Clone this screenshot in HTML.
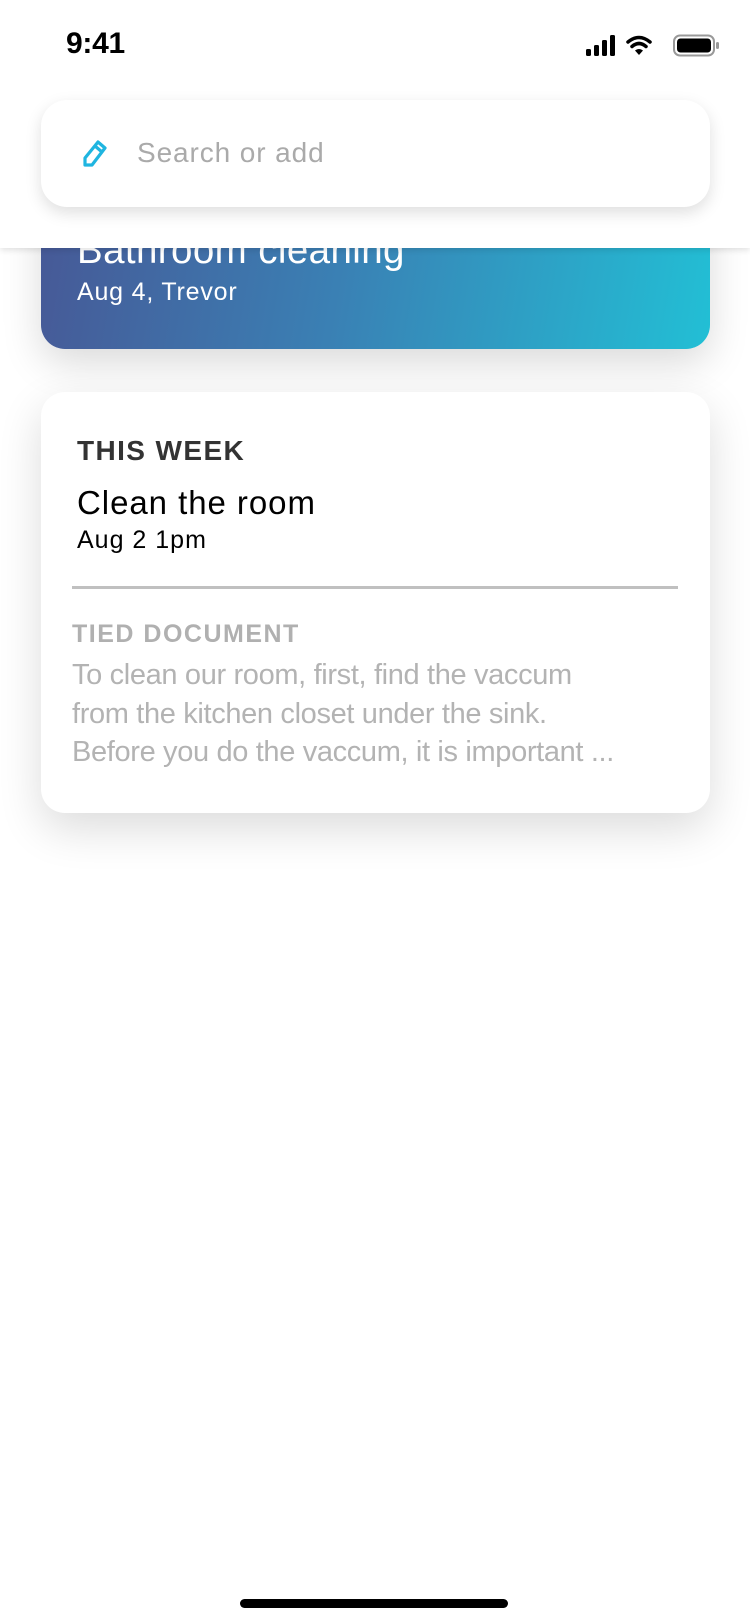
<!DOCTYPE html>
<html><head><meta charset="utf-8"><style>
body{margin:0;width:750px;height:1624px;background:#fff;position:relative;overflow:hidden;font-family:"Liberation Sans",sans-serif;}
.abs{position:absolute;white-space:nowrap;}
.grad{position:absolute;left:41px;top:180px;width:669px;height:169px;border-radius:24px;background:linear-gradient(100deg,#475896 0%,#3a80b4 45%,#22bfd5 100%);box-shadow:0 14px 40px rgba(0,0,0,0.15);}
.header{position:absolute;left:0;top:0;width:750px;height:248px;background:#fff;box-shadow:0 2px 6px rgba(0,0,0,0.12);}
.search{position:absolute;left:41px;top:100px;width:669px;height:107px;border-radius:26px;background:#fff;box-shadow:0 6px 16px rgba(0,0,0,0.13);}
.card{position:absolute;left:41px;top:392px;width:669px;height:421px;border-radius:24px;background:#fff;box-shadow:0 16px 44px rgba(0,0,0,0.14);}
</style></head><body>
<div class="grad">
<div class="abs" style="left:36px;top:51px;font-size:38.5px;color:#fff;line-height:40px;letter-spacing:0.4px;">Bathroom cleaning</div>
<div class="abs" style="left:36px;top:98px;font-size:25px;color:#fff;line-height:28px;letter-spacing:0.8px;">Aug 4, Trevor</div>
</div>
<div class="header">
<div class="abs" style="left:66px;top:27px;font-size:30px;font-weight:bold;color:#000;letter-spacing:-0.3px;">9:41</div>
<svg class="abs" style="left:586px;top:34px" width="136" height="24" viewBox="0 0 136 24">
<rect x="0" y="15" width="5" height="7" rx="1.5"/><rect x="8" y="11" width="5" height="11" rx="1.5"/><rect x="16" y="6" width="5" height="16" rx="1.5"/><rect x="24" y="1" width="5" height="21" rx="1.5"/>
<path d="M42 8 Q53 -1 64 8" stroke="#000" stroke-width="3.5" fill="none" stroke-linecap="round"/><path d="M46 12.5 Q53 6.5 60 12.5" stroke="#000" stroke-width="3.5" fill="none" stroke-linecap="round"/><path d="M49 16.5 L53 21 L57 16.5 Q53 13.5 49 16.5Z"/>
<rect x="88" y="1.5" width="40" height="20" rx="6" fill="none" stroke="#999" stroke-width="2"/><rect x="91" y="4.5" width="34" height="14" rx="3.5"/><rect x="130" y="8" width="3" height="7" rx="1.5" fill="#999"/>
</svg>
</div>
<div class="search">
<svg class="abs" style="left:40px;top:38px" width="30" height="30" viewBox="0 0 30 30"><path d="M4 27 L4 20 L17 4 L24 10 L11 27 Z M14 8 L21 14" stroke="#1fb5e0" stroke-width="3.2" fill="none" stroke-linejoin="round"/></svg>
<div class="abs" style="left:96px;top:36px;font-size:28px;color:#aaa;line-height:34px;letter-spacing:0.9px;">Search or add</div>
</div>
<div class="card">
<div class="abs" style="left:36px;top:44px;font-size:28px;font-weight:bold;color:#333;letter-spacing:1.4px;line-height:30px;">THIS WEEK</div>
<div class="abs" style="left:36px;top:93px;font-size:33px;color:#000;letter-spacing:0.95px;line-height:36px;">Clean the room</div>
<div class="abs" style="left:36px;top:135px;font-size:25px;color:#000;letter-spacing:1px;line-height:26px;">Aug 2 1pm</div>
<div class="abs" style="left:31px;top:194px;width:606px;height:3px;background:#c0c0c0;"></div>
<div class="abs" style="left:31px;top:228px;font-size:25px;font-weight:bold;color:#b0b0b0;letter-spacing:1.5px;line-height:28px;">TIED DOCUMENT</div>
<div class="abs" style="left:31px;top:264px;font-size:29px;color:#b3b3b3;letter-spacing:-0.35px;line-height:38.5px;">To clean our room, first, find the vaccum<br>from the kitchen closet under the sink.<br>Before you do the vaccum, it is important ...</div>
</div>
<div class="abs" style="left:240px;top:1599px;width:268px;height:9px;border-radius:5px;background:#000;"></div>
</body></html>
